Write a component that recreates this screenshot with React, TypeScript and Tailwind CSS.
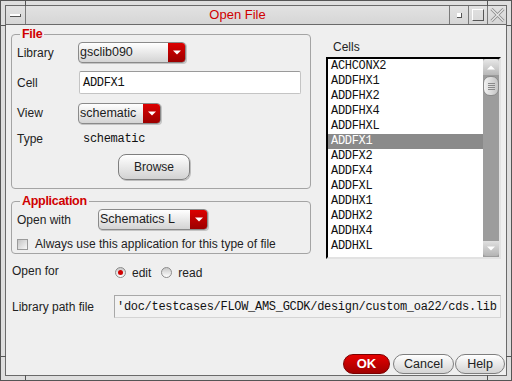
import React from "react";

const cells = [
  "ACHCONX2",
  "ADDFHX1",
  "ADDFHX2",
  "ADDFHX4",
  "ADDFHXL",
  "ADDFX1",
  "ADDFX2",
  "ADDFX4",
  "ADDFXL",
  "ADDHX1",
  "ADDHX2",
  "ADDHX4",
  "ADDHXL",
];

function Arrow() {
  return (
    <svg width="8" height="5" viewBox="0 0 8 5">
      <path d="M0 0.5 H8 L4 4.5 Z" fill="#ffffff" />
    </svg>
  );
}

function Dropdown({ cls, text }: { cls: string; text: string }) {
  return (
    <div
      className={
        "flex h-[21px] items-stretch overflow-hidden rounded-[4px] border border-[#8a8a8a] bg-gradient-to-b from-white to-[#d4d4d4] shadow-[1px_1px_0_#c4c4c4] " +
        cls
      }
    >
      <span className="flex-1 pl-[1px] text-[12.5px] leading-[18px] text-[#1c1c1c]">{text}</span>
      <span className="flex w-[17px] items-center justify-center bg-gradient-to-b from-[#dc0000] to-[#9c0000]">
        <Arrow />
      </span>
    </div>
  );
}

function Radio({ on }: { on?: boolean }) {
  return (
    <span className="flex h-[11px] w-[11px] items-center justify-center rounded-full border border-[#8c8c8c] bg-gradient-to-b from-[#c8c8c8] to-white">
      {on && <span className="h-[5px] w-[5px] rounded-full bg-[#d00000]" />}
    </span>
  );
}

export default function App() {
  return (
    <div className="relative h-[381px] w-[512px] overflow-hidden border border-[#555555] bg-[#dedede] p-[4px] font-['Liberation_Sans',Arial,sans-serif] text-[12px] text-[#222222]">
      <div className="flex h-full flex-col border border-[#6a6a6a] bg-[#efefef]">
        {/* title bar */}
        <div className="flex h-[19px] shrink-0 border-b border-[#6a6a6a] bg-gradient-to-b from-[#e2e2e2] to-[#d6d6d6]">
          <div className="flex w-[20px] items-center justify-center border-r border-[#7a7a7a]">
            <span className="h-[3px] w-[11px] border-b border-r border-[#555555] bg-white" />
          </div>
          <div className="flex flex-1 items-center justify-center text-[13px] leading-[18px] text-[#d00000]">
            Open File
          </div>
          <div className="flex w-[19px] items-center justify-center border-l border-[#7a7a7a]">
            <span className="h-[5px] w-[5px] border-b border-r border-[#555555] bg-white" />
          </div>
          <div className="flex w-[19px] items-center justify-center border-l border-[#7a7a7a]">
            <span className="h-[12px] w-[12px] border border-b-[#555555] border-r-[#555555] border-l-white border-t-white" />
          </div>
          <div className="flex w-[19px] items-center justify-center border-l border-[#7a7a7a]">
            <svg width="15" height="14" viewBox="0 0 15 14">
              <path d="M1.5 1 L13.5 13 M13.5 1 L1.5 13" stroke="#8a8a8a" strokeWidth="3" />
              <path d="M1.5 1 L13.5 13 M13.5 1 L1.5 13" stroke="#e6e6e6" strokeWidth="1.4" />
            </svg>
          </div>
        </div>

        {/* content */}
        <div className="flex flex-1 flex-col">
          <div className="flex items-start pl-[5px]">
            {/* left column */}
            <div className="w-[300px]">
              <fieldset className="mt-[2px] h-[162px] rounded-[4px] border border-[#a4a4a4] px-[5px]">
                <legend className="ml-[3px] px-[2px] text-[12.5px] font-bold leading-[15px] tracking-[-0.3px] text-[#d00000]">
                  File
                </legend>
                <div className="flex h-[21px] items-center">
                  <span className="w-[61px]">Library</span>
                  <Dropdown cls="w-[108px]" text="gsclib090" />
                </div>
                <div className="mt-[8px] flex h-[23px] items-center">
                  <span className="w-[62px]">Cell</span>
                  <div className="flex h-[23px] w-[222px] items-center rounded-[2px] border border-[#c4c4c4] border-t-[#9a9a9a] bg-white pl-[3px] font-['Liberation_Mono',monospace] text-[12px] tracking-[-0.3px] text-[#111111]">
                    ADDFX1
                  </div>
                </div>
                <div className="mt-[8px] flex h-[22px] items-center">
                  <span className="w-[61px]">View</span>
                  <Dropdown cls="w-[83px]" text="schematic" />
                </div>
                <div className="mt-[7px] flex h-[16px] items-center">
                  <span className="w-[66px]">Type</span>
                  <span className="font-['Liberation_Mono',monospace] text-[12px] tracking-[-0.3px] text-[#111111]">schematic</span>
                </div>
                <div className="mt-[7px] flex">
                  <div className="ml-[101px] flex h-[26px] w-[72px] items-center justify-center rounded-[8px] border border-[#7e7e7e] bg-gradient-to-b from-white to-[#d2d2d2] shadow-[1px_1px_0_#bdbdbd]">
                    Browse
                  </div>
                </div>
              </fieldset>

              <fieldset className="mt-[5px] h-[60px] rounded-[4px] border border-[#a4a4a4] px-[5px]">
                <legend className="ml-[3px] px-[2px] text-[12.5px] font-bold leading-[15px] tracking-[-0.3px] text-[#d00000]">
                  Application
                </legend>
                <div className="flex h-[21px] items-center">
                  <span className="w-[81px]">Open with</span>
                  <Dropdown cls="w-[110px]" text="Schematics L" />
                </div>
                <div className="mt-[6px] flex h-[16px] items-center">
                  <span className="h-[11px] w-[11px] border border-[#9a9a9a] bg-gradient-to-br from-[#c4c4c4] to-[#f8f8f8]" />
                  <span className="ml-[7px]">Always use this application for this type of file</span>
                </div>
              </fieldset>
            </div>

            {/* right column */}
            <div className="ml-[15px] w-[175px]">
              <div className="mt-[14px] pl-[7px] leading-[16px]">Cells</div>
              <div className="mt-[2px] flex h-[202px] border-b-[2px] border-l-[2px] border-r-[2px] border-t-[2px] border-b-[#e2e2e2] border-l-black border-r-[#e2e2e2] border-t-black">
                <div className="flex-1 bg-white font-['Liberation_Mono',monospace] text-[12px] tracking-[-0.3px] text-[#111111]">
                  {cells.map((c) => (
                    <div
                      key={c}
                      className={
                        c === "ADDFX1"
                          ? "h-[15px] bg-[#8a8a8a] pl-[3px] leading-[15px] text-white"
                          : "h-[15px] pl-[3px] leading-[15px]"
                      }
                    >
                      {c}
                    </div>
                  ))}
                </div>
                <div className="flex w-[16px] flex-col bg-[#9c9c9c]">
                  <div className="flex h-[16px] items-center justify-center rounded-t-[3px] bg-gradient-to-b from-[#e8e8e8] to-[#b8b8b8]">
                    <svg width="8" height="5" viewBox="0 0 8 5">
                      <path d="M0 4.5 H8 L4 0.5 Z" fill="#ffffff" />
                    </svg>
                  </div>
                  <div className="mt-[1px] flex h-[20px] flex-col items-center justify-center gap-[1px] rounded-[7px] border border-[#8a8a8a] bg-gradient-to-r from-[#f2f2f2] to-[#c4c4c4]">
                    <span className="h-[1px] w-[7px] bg-[#8a8a8a]" />
                    <span className="h-[1px] w-[7px] bg-[#8a8a8a]" />
                    <span className="h-[1px] w-[7px] bg-[#8a8a8a]" />
                    <span className="h-[1px] w-[7px] bg-[#8a8a8a]" />
                  </div>
                  <div className="mt-auto mb-[1px] flex h-[15px] items-center justify-center rounded-b-[3px] bg-gradient-to-b from-[#e0e0e0] to-[#b4b4b4]">
                    <Arrow />
                  </div>
                </div>
              </div>
            </div>
          </div>

          {/* open for */}
          <div className="mt-[3px] flex h-[17px] items-center pl-[6px]">
            <span className="w-[103px]">Open for</span>
            <div className="flex items-center pt-[4px]">
              <Radio on />
              <span className="ml-[6px]">edit</span>
              <span className="ml-[10px]">
                <Radio />
              </span>
              <span className="ml-[6px]">read</span>
            </div>
          </div>

          {/* library path */}
          <div className="mt-[16px] flex h-[23px] items-center pl-[6px]">
            <span className="w-[102px]">Library path file</span>
            <div className="flex h-[23px] w-[387px] items-center overflow-hidden whitespace-nowrap border border-[#d4d4d4] border-l-[#a8a8a8] border-t-[#a8a8a8] bg-[#f2f2f2] pl-[2px] font-['Liberation_Mono',monospace] text-[12px] tracking-[-0.3px] text-[#111111]">
              'doc/testcases/FLOW_AMS_GCDK/design/custom_oa22/cds.lib
            </div>
          </div>

          {/* buttons */}
          <div className="mb-[1px] mt-auto flex justify-end pr-[1px]">
            <div className="flex h-[20px] w-[47px] items-center justify-center rounded-full border border-[#7a0000] bg-gradient-to-b from-[#e60000] to-[#a00000] text-[13px] font-bold text-white">
              OK
            </div>
            <div className="ml-[3px] flex h-[20px] w-[61px] items-center justify-center rounded-full border border-[#7e7e7e] bg-gradient-to-b from-white to-[#d4d4d4] text-[12.5px]">
              Cancel
            </div>
            <div className="ml-[1px] flex h-[20px] w-[50px] items-center justify-center rounded-full border border-[#7e7e7e] bg-gradient-to-b from-white to-[#d4d4d4] text-[12.5px]">
              Help
            </div>
          </div>
        </div>
      </div>

      {/* frame resize ticks */}
      <span className="absolute left-[24px] top-0 h-[5px] w-[1px] bg-[#555555]" />
      <span className="absolute left-[486px] top-0 h-[5px] w-[1px] bg-[#555555]" />
      <span className="absolute bottom-0 left-[24px] h-[5px] w-[1px] bg-[#555555]" />
      <span className="absolute bottom-0 left-[486px] h-[5px] w-[1px] bg-[#555555]" />
      <span className="absolute left-0 top-[24px] h-[1px] w-[5px] bg-[#555555]" />
      <span className="absolute right-0 top-[24px] h-[1px] w-[5px] bg-[#555555]" />
      <span className="absolute left-0 top-[355px] h-[1px] w-[5px] bg-[#555555]" />
      <span className="absolute right-0 top-[355px] h-[1px] w-[5px] bg-[#555555]" />
    </div>
  );
}
